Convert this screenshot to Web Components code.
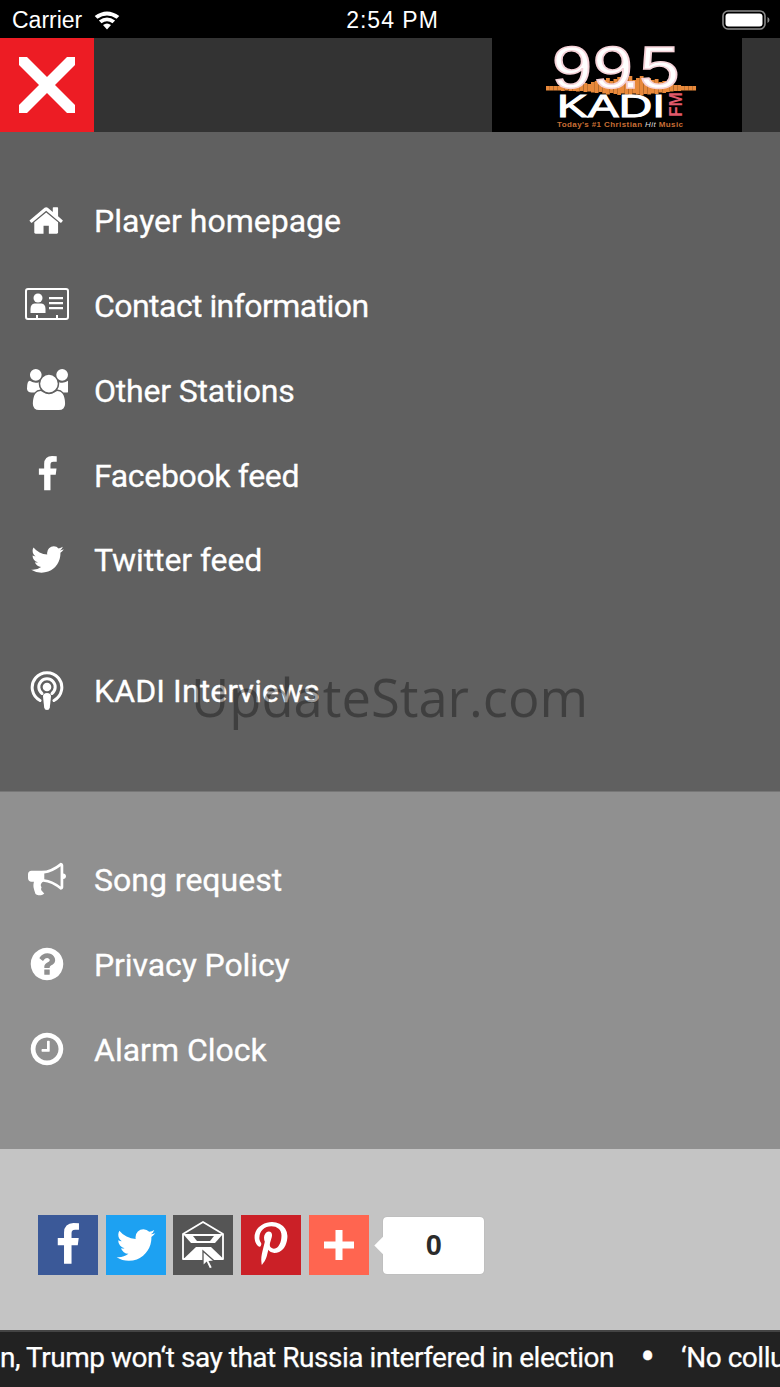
<!DOCTYPE html>
<html lang="en">

<head>
    <meta charset="UTF-8">
    <title>KADI Menu</title>
    <style>
        html, body { margin: 0; padding: 0; background: #5f5f5f; }
        body { width: 780px; height: 1387px; overflow: hidden; font-family: "Roboto", "Liberation Sans", sans-serif; }
    </style>
</head>

<body>
    <app-shell>
        <status-bar></status-bar>
        <top-bar></top-bar>
        <menu-section tone="dark">
            <menu-row icon="home">Player homepage</menu-row>
            <menu-row icon="card" track="-.55">Contact information</menu-row>
            <menu-row icon="users" track="-.2">Other Stations</menu-row>
            <menu-row icon="facebook" track="-.35">Facebook feed</menu-row>
            <menu-row icon="twitter" track="-.1">Twitter feed</menu-row>
            <menu-row icon="podcast" class="apart" track=".1">KADI Interviews</menu-row>
        </menu-section>
        <menu-section tone="mid">
            <menu-row icon="bullhorn">Song request</menu-row>
            <menu-row icon="question" track="-.1">Privacy Policy</menu-row>
            <menu-row icon="clock">Alarm Clock</menu-row>
        </menu-section>
        <share-bar></share-bar>
        <news-ticker></news-ticker>
    </app-shell>
    <water-mark></water-mark>
</body>

<script>
    const ICONS = {
        home: '<svg viewBox="0 0 1792 1792" width="37" height="37"><path d="M1408 992v480q0 26-19 45t-45 19h-384v-384h-256v384h-384q-26 0-45-19t-19-45v-480q0-1 .5-3t.5-3l575-474 575 474q1 2 1 6zm223-69l-62 74q-8 9-21 11h-3q-13 0-21-7l-692-577-692 577q-12 8-24 7-13-2-21-11l-62-74q-8-10-7-23.500t11-21.500l719-599q32-26 76-26t76 26l244 204v-195q0-14 9-23t23-9h192q14 0 23 9t9 23v408l219 182q10 8 11 21.500t-7 23.500z"/></svg>',
        card: '<svg viewBox="0 0 44 34" width="44" height="34"><rect x="1" y="1" width="42" height="30" rx="2" fill="none" stroke="#fff" stroke-width="2"/><circle cx="13" cy="10" r="4.500"/><path d="M5.500 25v-4q0-5 4-5.500h7q4 .5 4 5.500v4z"/><path d="M24 9h14v2.200h-14zM24 14h14v2.200h-14zM24 19h14v2.200h-14z"/><path d="M11 27h2v4h-2zM31 27h2v4h-2z"/></svg>',
        users: '<svg viewBox="0 0 1792 1792" width="41" height="41"><path d="M593 896q-162 5-265 128h-134q-82 0-138-40.500t-56-118.500q0-353 124-353 6 0 43.500 21t97.500 42.500 119 21.500q67 0 133-23-5 37-5 66 0 139 81 256zm1071 637q0 120-73 189.500t-194 69.500h-874q-121 0-194-69.500t-73-189.500q0-53 3.500-103.500t14-109 26.500-108.500 43-97.500 62-81 85.500-53.500 111.500-20q10 0 43 21.500t73 48 107 48 135 21.500 135-21.500 107-48 73-48 43-21.500q61 0 111.500 20t85.500 53.500 62 81 43 97.500 26.500 108.500 14 109 3.500 103.500zm-1024-1277q0 106-75 181t-181 75-181-75-75-181 75-181 181-75 181 75 75 181zm704 384q0 159-112.500 271.500t-271.500 112.500-271.500-112.500-112.500-271.500 112.500-271.500 271.500-112.500 271.500 112.500 112.500 271.500zm576 225q0 78-56 118.500t-138 40.500h-134q-103-123-265-128 81-117 81-256 0-29-5-66 66 23 133 23 59 0 119-21.500t97.500-42.500 43.500-21q124 0 124 353zm-128-609q0 106-75 181t-181 75-181-75-75-181 75-181 181-75 181 75 75 181z"/></svg>',
        facebook: '<svg viewBox="0 0 1792 1792" width="37" height="37"><path d="M1343 12v264h-157q-86 0-116 36t-30 108v189h293l-39 296h-254v759h-306v-759h-255v-296h255v-218q0-186 104-288.500t277-102.500q147 0 228 12z"/></svg>',
        twitter: '<svg viewBox="0 0 1792 1792" width="37" height="37"><path d="M1684 408q-67 98-162 167 1 14 1 42 0 130-38 259.500t-115.500 248.500-184.500 210.500-258 146-323 54.500q-271 0-496-145 35 4 78 4 225 0 401-138-105-2-188-64.500t-114-159.500q33 5 61 5 43 0 85-11-112-23-185.500-111.500t-73.500-205.500v-4q68 38 146 41-66-44-105-115t-39-154q0-88 44-163 121 149 294.500 238.500t371.500 99.500q-8-38-8-74 0-134 94.500-228.500t228.500-94.500q140 0 236 102 109-21 205-78-37 115-142 178 84-9 168-45z"/></svg>',
        podcast: '<svg viewBox="0 0 34 40" width="34" height="40"><g fill="none" stroke="#fff" stroke-width="3" stroke-linecap="round"><path d="M10 30.500a14.800 14.800 0 1 1 14 0"/><path d="M12 23.500a8.200 8.200 0 1 1 10 0"/></g><circle cx="17" cy="17" r="4.300"/><path d="M13 26.500q0-3.500 4-3.500t4 3.500l-1.200 11q-.3 2.500-2.800 2.500t-2.800-2.500z"/></svg>',
        bullhorn: '<svg viewBox="0 0 1792 1792" width="38" height="38"><path d="M1664 640q53 0 90.500 37.500t37.500 90.500-37.500 90.500-90.500 37.500v384q0 52-38 90t-90 38q-417-347-812-380-58 19-91 66t-31 100.500 40 92.500q-20 33-23 65.500t6 58 33.500 55 48 50 61.500 50.500q-29 58-111.500 83t-168.500 11.500-132-55.500q-7-23-29.500-87.500t-32-94.500-23-89-15-101 3.500-98.500 22-110.500h-122q-66 0-113-47t-47-113v-192q0-66 47-113t113-47h480q435 0 896-384 52 0 90 38t38 90v384zm-128 604v-954q-394 302-768 343v270q377 42 768 341z"/></svg>',
        question: '<svg viewBox="0 0 1792 1792" width="38" height="38"><path d="M1024 1376v-192q0-14-9-23t-23-9h-192q-14 0-23 9t-9 23v192q0 14 9 23t23 9h192q14 0 23-9t9-23zm256-672q0-88-55.500-163t-138.500-116-170-41q-243 0-371 213-15 24 8 42l132 100q7 6 19 6 16 0 25-12 53-68 86-92 34-24 86-24 48 0 85.500 26t37.500 59q0 38-20 61t-68 45q-63 28-115.500 86.500t-52.500 125.500v36q0 14 9 23t23 9h192q14 0 23-9t9-23q0-19 21.500-49.500t54.500-49.500q32-18 49-28.500t46-35 44.500-48 28-60.500 12.500-81zm384 192q0 209-103 385.500t-279.500 279.500-385.500 103-385.500-103-279.500-279.500-103-385.500 103-385.500 279.500-279.500 385.500-103 385.500 103 279.500 279.500 103 385.500z"/></svg>',
        clock: '<svg viewBox="0 0 1792 1792" width="38" height="38"><path d="M1024 544v448q0 14-9 23t-23 9h-320q-14 0-23-9t-9-23v-64q0-14 9-23t23-9h224v-352q0-14 9-23t23-9h64q14 0 23 9t9 23zm416 352q0-148-73-273t-198-198-273-73-273 73-198 198-73 273 73 273 198 198 273 73 273-73 198-198 73-273zm224 0q0 209-103 385.500t-279.500 279.500-385.500 103-385.500-103-279.500-279.500-103-385.500 103-385.500 279.500-279.500 385.500-103 385.500 103 279.500 279.500 103 385.500z"/></svg>'
    };

    class AppShell extends HTMLElement {
        constructor() {
            super();
            this.attachShadow({ mode: 'open' });
            this.shadowRoot.innerHTML = `
                <style>
                    :host { display: flex; flex-direction: column; width: 780px; height: 1387px; position: relative; }
                </style>
                <slot></slot>`;
        }
    }

    class StatusBar extends HTMLElement {
        constructor() {
            super();
            this.attachShadow({ mode: 'open' });
            this.shadowRoot.innerHTML = `
                <style>
                    :host { display: grid; grid-template-columns: 1fr auto 1fr; align-items: center; height: 38px; box-sizing: border-box; padding-top: 2px; background: #000; color: #fff; font: 23px "Liberation Sans", sans-serif; flex: none; }
                    .left { display: flex; align-items: center; gap: 12px; padding-left: 12px; }
                    .right { display: flex; justify-content: flex-end; padding-right: 10px; }
                    .time { letter-spacing: 1px; margin-left: 5px; }
                </style>
                <div class="left">
                    <span>Carrier</span>
                    <svg width="26" height="19" viewBox="0 0 26 19" fill="#fff"><path d="M13 18.500l-4-4.500q4-3 8 0zM7.500 12.300l-2.600-2.800q8.100-6 16.200 0l-2.600 2.800q-5.500-4-11 0zM3.400 7.800L.7 4.900q12.300-9 24.600 0l-2.700 2.900q-9.600-6.800-19.200 0z"/></svg>
                </div>
                <span class="time">2:54 PM</span>
                <div class="right">
                    <svg width="48" height="22" viewBox="0 0 48 22"><rect x="1" y="2" width="42" height="18" rx="5" fill="none" stroke="#8a8a8a" stroke-width="1.600"/><rect x="3.500" y="4.500" width="37" height="13" rx="3" fill="#fff"/><path d="M45.500 8q2 .8 2 3t-2 3z" fill="#8a8a8a"/></svg>
                </div>`;
        }
    }

    class TopBar extends HTMLElement {
        constructor() {
            super();
            this.attachShadow({ mode: 'open' });
            this.shadowRoot.innerHTML = `
                <style>
                    :host { display: flex; height: 94px; background: #333; flex: none; }
                    .close { width: 94px; height: 94px; background: #ed1c24; display: flex; align-items: center; justify-content: center; }
                    .fill { flex: 1; }
                    .end { width: 38px; }
                </style>
                <div class="close">
                    <svg width="60" height="60" viewBox="0 0 60 60" fill="#fff"><path d="M2 10V2h8l20 20L50 2h8v8L38 30l20 20v8h-8L30 38 10 58H2v-8l20-20z"/></svg>
                </div>
                <div class="fill"></div>
                <kadi-logo></kadi-logo>
                <div class="end"></div>`;
        }
    }

    class KadiLogo extends HTMLElement {
        constructor() {
            super();
            this.attachShadow({ mode: 'open' });
            // wave is built from a list of bar heights
            const bars = [1, 1, 1, 1, 2, 1, 2, 2, 3, 2, 4, 3, 5, 6, 4, 7, 9, 6, 8, 10, 7, 9, 11, 7, 9, 11, 8, 9, 7, 8, 5, 6, 4, 3, 2, 2, 1, 1, 1, 1];
            let wave = '';
            bars.forEach((h, i) => {
                wave += `<rect x="${54 + i * 3.75}" y="${49 - h}" width="3.800" height="${h * 1.5 + 3}" fill="#e8893b"/>`;
            });
            this.shadowRoot.innerHTML = `
                <style>
                    :host { display: block; width: 250px; height: 94px; background: #000; flex: none; }
                    svg { display: block; }
                </style>
                <svg width="250" height="94" viewBox="0 0 250 94">
                    ${wave}
                    <text transform="scale(1.2,1)" x="50 84 107 123" y="50" font-family="Liberation Sans, sans-serif" font-size="60" fill="#fff" stroke="#f6d3d9" stroke-width="1.500">99.5</text>
                    <text x="65" y="79" font-family="Liberation Sans, sans-serif" font-size="31" fill="#fff" stroke="#fff" stroke-width="1" textLength="108" lengthAdjust="spacingAndGlyphs">KADI</text>
                    <text transform="translate(190,79) rotate(-90)" font-family="Liberation Sans, sans-serif" font-weight="700" font-size="18" fill="#e2596b" textLength="25" lengthAdjust="spacingAndGlyphs">FM</text>
                    <text x="65" y="88.500" font-family="Liberation Sans, sans-serif" font-weight="700" font-size="8" fill="#c96f35" textLength="126" lengthAdjust="spacing">Today's #1 Christian <tspan fill="#ddd" font-style="italic" font-weight="400">Hit</tspan> Music</text>
                </svg>`;
        }
    }

    class MenuSection extends HTMLElement {
        constructor() {
            super();
            this.attachShadow({ mode: 'open' });
            this.shadowRoot.innerHTML = `
                <style>
                    :host { display: flex; flex-direction: column; flex: none; box-sizing: border-box; }
                    :host([tone="dark"]) { height: 660px; background: #606060; padding-top: 46px; border-bottom: 1px solid #777; }
                    :host([tone="mid"]) { height: 357px; background: #909090; padding-top: 45px; }
                </style>
                <slot></slot>`;
        }
    }

    class MenuRow extends HTMLElement {
        constructor() {
            super();
            this.attachShadow({ mode: 'open' });
            const icon = ICONS[this.getAttribute('icon')] || '';
            const track = this.getAttribute('track') || '0';
            this.shadowRoot.innerHTML = `
                <style>
                    :host { display: flex; align-items: center; height: 84.750px; flex: none; color: #fff; font: 400 32px "Roboto", sans-serif; }
                    :host(.apart) { margin-top: 46px; }
                    .ico { width: 94px; height: 44px; display: flex; align-items: center; justify-content: center; flex: none; fill: #fff; }
                    span { margin-top: 2px; letter-spacing: ${track}px; -webkit-text-stroke: .3px #fff; }
                </style>
                <div class="ico">${icon}</div>
                <span><slot></slot></span>`;
        }
    }

    class ShareBar extends HTMLElement {
        constructor() {
            super();
            this.attachShadow({ mode: 'open' });
            this.shadowRoot.innerHTML = `
                <style>
                    :host { display: flex; align-items: center; gap: 7.700px; height: 181px; box-sizing: border-box; background: #c4c4c4; padding: 11px 0 0 38px; flex: none; }
                    .btn { width: 60px; height: 60px; display: flex; align-items: center; justify-content: center; fill: #fff; }
                    .fb { background: #3b5998; }
                    .tw { background: #1da1f2; }
                    .em { background: #555; }
                    .pi { background: #cb2027; }
                    .pl { background: #ff6550; }
                    .count { position: relative; margin-left: 7px; width: 101px; height: 57px; background: #fff; border-radius: 4px; box-shadow: 0 0 1px #999; display: flex; align-items: center; justify-content: center; font: 700 29px "Liberation Sans", sans-serif; color: #2b2b2b; }
                    .count::before { content: ""; position: absolute; left: -6px; top: 22px; width: 13px; height: 13px; background: #fff; transform: rotate(45deg); }
                    .count span { position: relative; }
                </style>
                <div class="btn fb"><svg viewBox="0 0 1792 1792" width="44" height="44"><path d="M1343 12v264h-157q-86 0-116 36t-30 108v189h293l-39 296h-254v759h-306v-759h-255v-296h255v-218q0-186 104-288.500t277-102.500q147 0 228 12z"/></svg></div>
                <div class="btn tw"><svg viewBox="0 0 1792 1792" width="44" height="44"><path d="M1684 408q-67 98-162 167 1 14 1 42 0 130-38 259.500t-115.500 248.500-184.500 210.500-258 146-323 54.500q-271 0-496-145 35 4 78 4 225 0 401-138-105-2-188-64.500t-114-159.500q33 5 61 5 43 0 85-11-112-23-185.500-111.500t-73.500-205.500v-4q68 38 146 41-66-44-105-115t-39-154q0-88 44-163 121 149 294.500 238.500t371.500 99.500q-8-38-8-74 0-134 94.500-228.500t228.500-94.500q140 0 236 102 109-21 205-78-37 115-142 178 84-9 168-45z"/></svg></div>
                <div class="btn em"><svg viewBox="0 0 60 60" width="60" height="60"><path d="M10 19L30 7l20 12v25H10z" fill="none" stroke="#fff" stroke-width="1.800" stroke-linejoin="round"/><path d="M10 19h40l-8 9H18z" fill="#fff"/><path d="M20 21h21l-4 5H24z" fill="#555"/><path d="M11.500 43L23 32h15l11.500 11z" fill="#fff"/><path d="M30 36l0 15 3.500-3.500 3 6.500 3-1.500-3-6 5-.3z" fill="#fff" stroke="#555" stroke-width="1.300"/></svg></div>
                <div class="btn pi"><svg viewBox="0 0 1792 1792" width="46" height="46"><path d="M256 597q0-108 37.500-203.500t103.500-166.500 152-123 185-78 202-26q158 0 294 66.500t221 193.500 85 287q0 96-19 188t-60 177-100 149.500-145 103-189 38.500q-68 0-135-32t-96-88q-10 39-28 112.500t-23.500 95-20.500 71-26 71-32 62.500-46 77.500-62 86.500l-14 5-9-10q-15-157-15-188 0-92 21.500-206.500t66.500-287.500 52-203q-32-65-32-169 0-83 52-156t132-73q61 0 95 40.500t34 102.500q0 66-44 191t-44 187q0 63 45 104.500t109 41.500q55 0 102-25t78.500-68 56-95 38-110.500 20-111 6.500-99.500q0-173-109.500-269.500t-285.500-96.500q-200 0-334 129.500t-134 328.500q0 44 12.500 85t27 65 27 45.500 12.500 30.500q0 28-15 73t-37 45q-2 0-17-3-51-15-90.500-56t-61-94.500-32.500-108-11-106.500z"/></svg></div>
                <div class="btn pl"><svg viewBox="0 0 32 32" width="32" height="32"><path d="M12.500 1h7v11.500H31v7H19.500V31h-7V19.500H1v-7h11.500z"/></svg></div>
                <div class="count"><span>0</span></div>`;
        }
    }

    class NewsTicker extends HTMLElement {
        constructor() {
            super();
            this.attachShadow({ mode: 'open' });
            this.shadowRoot.innerHTML = `
                <style>
                    :host { display: block; height: 57px; background: #222; border-top: 2px solid #444; box-sizing: border-box; overflow: hidden; position: relative; color: #fff; font: 400 28px "Roboto", sans-serif; flex: none; }
                    .run { white-space: nowrap; position: absolute; left: 0; top: 9px; display: flex; align-items: center; letter-spacing: -.47px; -webkit-text-stroke: .25px #fff; }
                    .dot { width: 67px; text-align: center; font-size: 44px; line-height: 33px; }
                </style>
                <div class="run"><span>n, Trump won‘t say that Russia interfered in election</span><span class="dot">•</span><span>‘No collu</span></div>`;
        }
    }

    class WaterMark extends HTMLElement {
        constructor() {
            super();
            this.attachShadow({ mode: 'open' });
            this.shadowRoot.innerHTML = `
                <style>
                    :host { position: absolute; left: 191px; top: 661px; font: 400 52.500px "Open Sans", sans-serif; color: rgba(20,20,20,.42); pointer-events: none; white-space: nowrap; }
                </style>
                UpdateStar.com`;
        }
    }

    window.customElements.define('app-shell', AppShell);
    window.customElements.define('status-bar', StatusBar);
    window.customElements.define('top-bar', TopBar);
    window.customElements.define('kadi-logo', KadiLogo);
    window.customElements.define('menu-section', MenuSection);
    window.customElements.define('menu-row', MenuRow);
    window.customElements.define('share-bar', ShareBar);
    window.customElements.define('news-ticker', NewsTicker);
    window.customElements.define('water-mark', WaterMark);
</script>

</html>
